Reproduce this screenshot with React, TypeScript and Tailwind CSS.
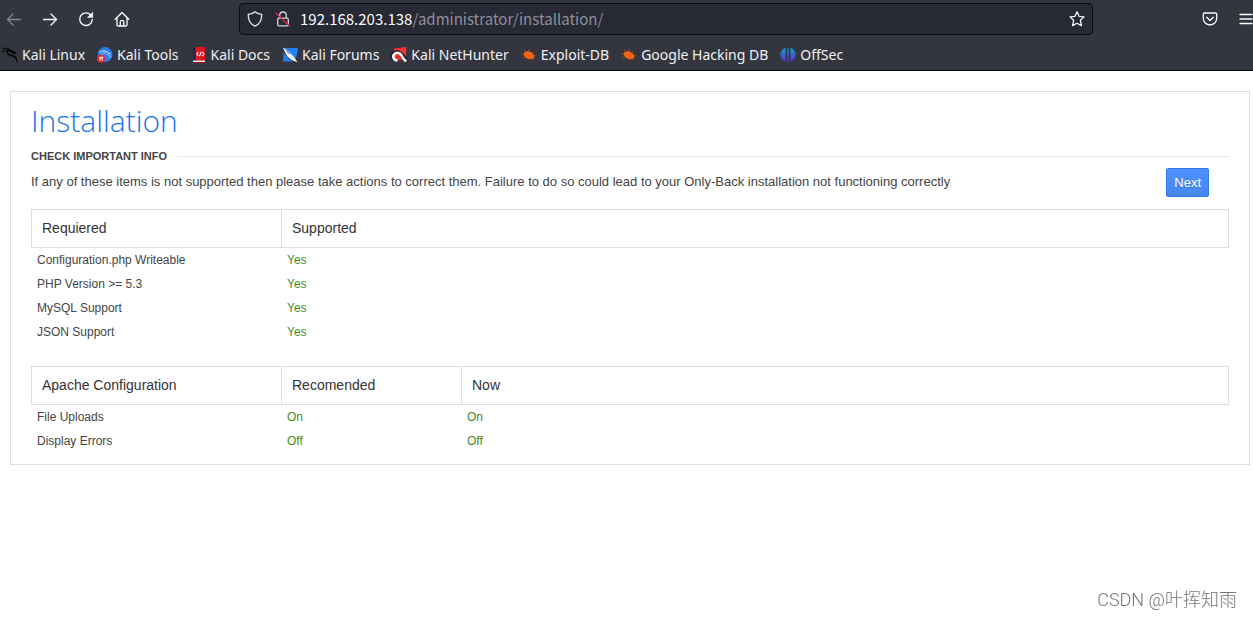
import type { ReactNode } from "react";

const KaliIcon = () => (
  <svg className="h-4 w-4 shrink-0" viewBox="0 0 16 16" fill="none" stroke="#050505" strokeLinecap="round">
    <path d="M.5 1.2C4 1 7.5 1.8 9.8 4" strokeWidth="1" />
    <path d="M.5 4.8C3 3.2 6.5 3 9 4.2" strokeWidth="1.2" />
    <path d="M9.2 3.8l3.2.8 1.8 2-2.4-.2-2.6-1z" strokeWidth="1" fill="#050505" />
    <path d="M5.6 3.6C4.8 6.2 6.4 8 9 8.4c3 .5 4.8 1.6 5.6 4.2" strokeWidth="1.6" />
    <path d="M12.2 9.8c2 1.2 2.4 3.2 3 5.2" strokeWidth="1" />
  </svg>
);

const ToolsIcon = () => (
  <svg className="h-4 w-4 shrink-0" viewBox="0 0 16 16" fill="none">
    <circle cx="8" cy="7.5" r="7.4" fill="#2c7cf0" />
    <path d="M2.400 5.400c3-2.200 6.400-1.800 8.400.200l3 1.600" stroke="#dbe9fb" strokeWidth="1" />
    <path d="M4 7.600c2.600-2.200 4.600-2 5.800-.600.800 1.600 3.400 1 4 4" stroke="#a9cdf8" strokeWidth="1" />
    <circle cx="4" cy="11.700" r="4" fill="#e8242c" />
    <path d="M1.800 10.300h4.600M3.100 10.300v3.400M5.200 10.300v3.400" stroke="#fff" strokeWidth="1" />
  </svg>
);

const DocsIcon = () => (
  <svg className="h-4 w-4 shrink-0" viewBox="0 0 16 16" fill="none">
    <path d="M2 0h3v14H2z" fill="#262354" />
    <path d="M4.500 0H14v13.500H4.500z" fill="#e0161d" />
    <path d="M2 13.500h12V15H2z" fill="#f1e8e8" />
    <path d="M2 15h12v1H2z" fill="#a91118" />
    <path d="M7.400 5L5.800 7l1.600 2M11.400 5L13 7l-1.600 2M10.300 4.800L8.500 9.200" stroke="#fff" strokeWidth="1.100" />
  </svg>
);

const ForumsIcon = () => (
  <svg className="h-4 w-4 shrink-0" viewBox="0 0 16 16" fill="none">
    <path d="M2 1h14l-2.500 13.500H1z" fill="#2680f5" />
    <path d="M0 0l7 4.800 4 4.300L16 16l-7-3.200L5 9.500 3 5z" fill="#f5f5f5" />
    <path d="M0 0l4 8.500 5 4.800 7 2.700M4.500 4l3.500 3" stroke="#141820" strokeWidth=".7" />
  </svg>
);

const NetHunterIcon = () => (
  <svg className="h-4 w-4 shrink-0" viewBox="0 0 16 16" fill="none">
    <path d="M3 1.500L15.500 0l-.8 12.500L2.500 13z" fill="#f5343c" />
    <path d="M3 12.500C0 10 1.500 5.500 5.500 4.500c4-.800 6.500 2.500 9.500 8" stroke="#111" strokeWidth="2.400" />
    <path d="M6.500 13.500c-4.500-.5-5.500-5-2.500-7 3.500-2.200 6 .5 8 4.500l3 3.500" stroke="#fff" strokeWidth="2.600" />
    <path d="M5 10c2-2 4-.5 5 1.500" stroke="#e7232d" strokeWidth="1.600" />
  </svg>
);

const BugIcon = () => (
  <svg className="h-4 w-4 shrink-0" viewBox="0 0 16 16" fill="none">
    <path
      d="M3 3l3 3M8 2l.500 4M.500 6.500l4 1M1.500 11l4-1.500M12 4.500L10 7M15.500 8.500l-3 .2M7 13l1.500-2M14 12.500l-3-1.500"
      stroke="#b54c15"
      strokeWidth=".8"
    />
    <ellipse cx="8" cy="8.300" rx="5.600" ry="3.500" transform="rotate(24 8 8.300)" fill="#f36412" />
  </svg>
);

const OffSecIcon = () => (
  <svg className="h-4 w-4 shrink-0" viewBox="0 0 16 16">
    <defs>
      <linearGradient id="offsec" x1="0" y1="0" x2="0" y2="1">
        <stop offset="0" stopColor="#169fc4" />
        <stop offset=".5" stopColor="#3764d4" />
        <stop offset="1" stopColor="#5f28c4" />
      </linearGradient>
    </defs>
    <path
      d="M5.600.800v14C2.400 13.800.400 11 .400 7.900S2.400 1.700 5.600.800zM7.300 1.500h1.400v14H7.300zM10.400.800c3.200.900 5.200 4 5.200 7.100s-2 5.900-5.200 6.900z"
      fill="url(#offsec)"
    />
  </svg>
);

const bookmarks: { label: string; icon: ReactNode }[] = [
  { label: "Kali Linux", icon: <KaliIcon /> },
  { label: "Kali Tools", icon: <ToolsIcon /> },
  { label: "Kali Docs", icon: <DocsIcon /> },
  { label: "Kali Forums", icon: <ForumsIcon /> },
  { label: "Kali NetHunter", icon: <NetHunterIcon /> },
  { label: "Exploit-DB", icon: <BugIcon /> },
  { label: "Google Hacking DB", icon: <BugIcon /> },
  { label: "OffSec", icon: <OffSecIcon /> },
];

const requirements = [
  ["Configuration.php Writeable", "Yes"],
  ["PHP Version >= 5.3", "Yes"],
  ["MySQL Support", "Yes"],
  ["JSON Support", "Yes"],
];

const apacheSettings = [
  ["File Uploads", "On", "On"],
  ["Display Errors", "Off", "Off"],
];

function ToolbarButton({ label, disabled, children }: { label: string; disabled?: boolean; children: ReactNode }) {
  return (
    <button
      type="button"
      aria-label={label}
      disabled={disabled}
      className="flex h-8 w-9 shrink-0 items-center justify-center text-[#fbfbfe] disabled:opacity-40"
    >
      <svg
        className="h-4 w-4"
        viewBox="0 0 16 16"
        fill="none"
        stroke="currentColor"
        strokeWidth="1.300"
        strokeLinecap="round"
        strokeLinejoin="round"
      >
        {children}
      </svg>
    </button>
  );
}

function BrowserBar() {
  return (
    <header className="overflow-hidden border-b border-[#0c0c12] bg-[#33363f] font-['Noto_Sans',sans-serif] text-[#f0f0f4]">
      <div className="-mr-[11px] -ml-1 flex items-center pt-[3px]">
        <ToolbarButton label="Back" disabled>
          <path d="M14.500 8.500H1.500M7 3L1.500 8.500 7 14" />
        </ToolbarButton>
        <ToolbarButton label="Forward">
          <path d="M1.500 8.500h13M9 3L14.500 8.500 9 14" />
        </ToolbarButton>
        <ToolbarButton label="Reload">
          <path d="M12.800 4.100A6.300 6.300 0 1 0 14.300 8.500" />
          <path d="M14.600 1.700v4.600H10z" fill="currentColor" strokeWidth=".8" />
        </ToolbarButton>
        <ToolbarButton label="Home">
          <path d="M1.200 8.300L8 1.500l6.800 6.800M3 7.100v6.600c0 .8.500 1.300 1.300 1.300h7.400c.8 0 1.300-.5 1.300-1.300V7.100M6.300 14.800V10.600c0-.5.400-.9.900-.9h1.600c.5 0 .9.400.9.900v4.200" />
        </ToolbarButton>

        {/* Address bar */}
        <div className="mx-[99px] flex h-8 min-w-0 flex-1 items-center rounded border border-[#0c0c12] bg-[#272935] px-[7px]">
          <svg
            className="h-4 w-4 shrink-0"
            viewBox="0 0 16 16"
            fill="none"
            stroke="#e6e6ea"
            strokeWidth="1.300"
            strokeLinejoin="round"
          >
            <path d="M8 .900c2.200 1.600 4.400 2.300 6.700 2.500.2 5.100-1.500 9.400-6.700 11.700C2.800 12.800 1.100 8.500 1.300 3.400 3.600 3.200 5.800 2.500 8 .900z" />
          </svg>
          <svg
            className="ml-3 h-4 w-4 shrink-0"
            viewBox="0 0 16 16"
            fill="none"
            stroke="#d4d4d8"
            strokeWidth="1.300"
            strokeLinejoin="round"
          >
            <path d="M4.700 7V4.300a3.300 3.300 0 0 1 6.600 0V7" />
            <rect x="2.700" y="7.200" width="10.600" height="7.600" rx="1.200" />
            <path d="M1 2.200L14.600 15" stroke="#e22850" strokeLinecap="round" />
          </svg>
          <a
            href="#"
            className="ml-[9px] flex-1 truncate font-['Noto_Sans_CJK_SC',sans-serif] text-[15px] leading-6 text-[#8f8f99]"
          >
            <span className="text-[#fbfbfe]">192.168.203.138</span>/administrator/installation/
          </a>
          <button type="button" aria-label="Bookmark this page" className="shrink-0">
            <svg
              className="h-4 w-4"
              viewBox="0 0 16 16"
              fill="none"
              stroke="#f2f2f5"
              strokeWidth="1.300"
              strokeLinejoin="round"
            >
              <path d="M8 .900l2.100 4.400 4.900.6-3.600 3.400 1 5.300L8 12.200l-4.400 2.400 1-5.300L1 5.900l4.900-.6z" />
            </svg>
          </button>
        </div>

        <ToolbarButton label="Save to Pocket">
          <path d="M2.300 2h11.400c.6 0 1 .4 1 1v4.300a6.700 6.700 0 0 1-13.400 0V3c0-.6.400-1 1-1zM4.700 6.300L8 9.500l3.300-3.200" />
        </ToolbarButton>
        <ToolbarButton label="Open application menu">
          <path d="M2 3.500h12M2 8h12M2 12.500h12" />
        </ToolbarButton>
      </div>

      <nav className="flex h-[35px] items-center gap-3 pt-[5px] pl-[2px]">
        {bookmarks.map((bookmark) => (
          <a
            key={bookmark.label}
            href="#"
            className="flex items-center gap-1 text-sm leading-5 whitespace-nowrap"
          >
            {bookmark.icon}
            {bookmark.label}
          </a>
        ))}
      </nav>
    </header>
  );
}

function InfoTable({ headers, rows }: { headers: string[]; rows: string[][] }) {
  return (
    <table className="w-full table-fixed border-separate border-spacing-0 text-left">
      <colgroup>
        {headers.map((header, i) => (
          <col
            key={header}
            className={i === headers.length - 1 ? "" : i === 0 ? "w-[250px]" : "w-[180px]"}
          />
        ))}
      </colgroup>
      <thead>
        <tr>
          {headers.map((header) => (
            <th
              key={header}
              scope="col"
              className="border-y border-l border-[#dddddd] px-[10px] py-2 text-sm leading-[21px] font-normal text-[#333333] last:border-r"
            >
              {header}
            </th>
          ))}
        </tr>
      </thead>
      <tbody>
        {rows.map((row) => (
          <tr key={row[0]} className="h-6">
            {row.map((cell, i) => (
              <td
                key={i}
                className={i === 0 ? "px-[6px] text-xs text-[#444444]" : "px-[6px] text-xs text-[#468b20]"}
              >
                {cell}
              </td>
            ))}
          </tr>
        ))}
      </tbody>
    </table>
  );
}

export default function App() {
  return (
    <div className="min-h-screen bg-white font-['Liberation_Sans',Arial,sans-serif] text-[#444444]">
      <BrowserBar />

      <main className="mt-5 mr-[3px] ml-[10px] border border-[#dddddd] px-5 pt-[7px] pb-[11px]">
        <h1 className="font-['Open_Sans',sans-serif] text-3xl leading-[44px] font-light text-[#1a73e8]">
          Installation
        </h1>

        <div className="mt-[5px] flex items-center gap-[10px]">
          <h2 className="text-[11px] leading-4 font-bold uppercase">Check important info</h2>
          <div className="h-px flex-1 bg-[#e9e9e9]" />
        </div>

        <div className="mt-1 mb-3 flex items-start justify-between pr-5">
          <p className="pt-1 text-[13px] leading-5">
            If any of these items is not supported then please take actions to correct them. Failure to do so could
            lead to your Only-Back installation not functioning correctly
          </p>
          <button
            type="button"
            className="shrink-0 rounded-xs border border-[#3079ed] bg-linear-to-b from-[#4d90fe] to-[#4787ed] px-[7px] text-[13px] leading-[27px] text-white text-shadow-2xs"
          >
            Next
          </button>
        </div>

        <InfoTable headers={["Requiered", "Supported"]} rows={requirements} />
        <div className="mt-[22px]">
          <InfoTable headers={["Apache Configuration", "Recomended", "Now"]} rows={apacheSettings} />
        </div>
      </main>

      <div className="pointer-events-none fixed right-4 bottom-1 font-['Roboto','Noto_Sans_CJK_SC',sans-serif] text-lg leading-7 font-light text-[#777777]">
        CSDN @叶挥知雨
      </div>
    </div>
  );
}
